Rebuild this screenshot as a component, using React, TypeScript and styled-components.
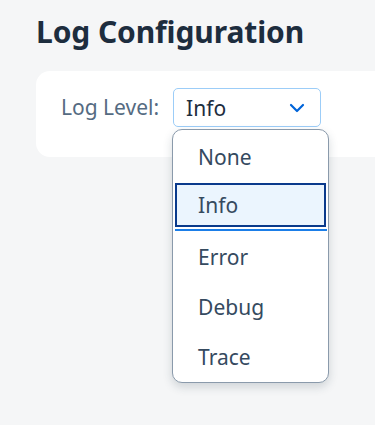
import React from 'react';
import styled, { createGlobalStyle } from 'styled-components';

const GlobalStyle = createGlobalStyle`
  html, body {
    margin: 0;
    padding: 0;
    background: #f5f6f7;
    font-family: "Noto Sans", "Open Sans", sans-serif;
  }
`;

const Page = styled.div`
  width: 375px;
  height: 425px;
  overflow: hidden;
  padding: 14px 0 0 36px;
  box-sizing: border-box;
`;

const Title = styled.h1`
  margin: 0;
  font-size: 30px;
  line-height: 36px;
  font-weight: 700;
  color: #1d2d3e;
  letter-spacing: -0.1px;
`;

const Card = styled.div`
  margin-top: 21px;
  width: 380px;
  height: 86px;
  background: #ffffff;
  border-radius: 14px;
  display: flex;
  align-items: flex-start;
  padding: 17px 0 0 25px;
  box-sizing: border-box;
  gap: 14px;
`;

const Label = styled.span`
  font-size: 21px;
  line-height: 39px;
  color: #556b82;
`;

const SelectWrap = styled.div`
  position: relative;
`;

const SelectBox = styled.div`
  width: 148px;
  height: 39px;
  box-sizing: border-box;
  border: 1px solid #9ccdf8;
  border-radius: 5px;
  background: #ffffff;
  display: flex;
  align-items: center;
  justify-content: space-between;
  padding: 0 15px 0 12px;
  font-size: 21px;
  color: #1d2d3e;
`;

const Menu = styled.ul`
  position: absolute;
  top: 41px;
  left: -1px;
  width: 157px;
  height: 254px;
  box-sizing: border-box;
  margin: 0;
  padding: 2px 0 0;
  list-style: none;
  background: #ffffff;
  border: 1px solid #8a9aab;
  border-radius: 10px;
  box-shadow: 0 4px 10px rgba(34, 54, 73, 0.18);
  z-index: 2;
`;

const Item = styled.li<{ $focused?: boolean }>`
  position: relative;
  height: 50px;
  display: flex;
  align-items: center;
  padding-left: 25px;
  font-size: 21px;
  color: #354a5f;

  ${({ $focused }) =>
    $focused &&
    `
    &::before {
      content: '';
      position: absolute;
      left: 2px;
      right: 2px;
      top: 1px;
      bottom: 5px;
      background: #ebf5fe;
      border: 2px solid #0a3a8c;
      z-index: 0;
    }
    &::after {
      content: '';
      position: absolute;
      left: 2px;
      right: 1px;
      bottom: 1px;
      height: 2px;
      background: #1b7ee8;
    }
  `}
`;

const ItemText = styled.span<{ $focused?: boolean }>`
  position: relative;
  z-index: 1;
  margin-top: ${({ $focused }) => ($focused ? '-4px' : '0')};
`;

const levels = ['None', 'Info', 'Error', 'Debug', 'Trace'];

const App: React.FC = () => {
  const current = 'Info';

  return (
    <>
      <GlobalStyle />
      <Page>
        <Title>Log Configuration</Title>
        <Card>
          <Label>Log Level:</Label>
          <SelectWrap>
            <SelectBox>
              {current}
              <svg width="16" height="10" viewBox="0 0 16 10">
                <path d="M2 2 L8 8 L14 2" fill="none" stroke="#0064d9" strokeWidth="2.2" strokeLinecap="round" strokeLinejoin="round" />
              </svg>
            </SelectBox>
            <Menu>
              {levels.map((level) => (
                <Item key={level} $focused={level === current}>
                  <ItemText $focused={level === current}>{level}</ItemText>
                </Item>
              ))}
            </Menu>
          </SelectWrap>
        </Card>
      </Page>
    </>
  );
};

export default App;
